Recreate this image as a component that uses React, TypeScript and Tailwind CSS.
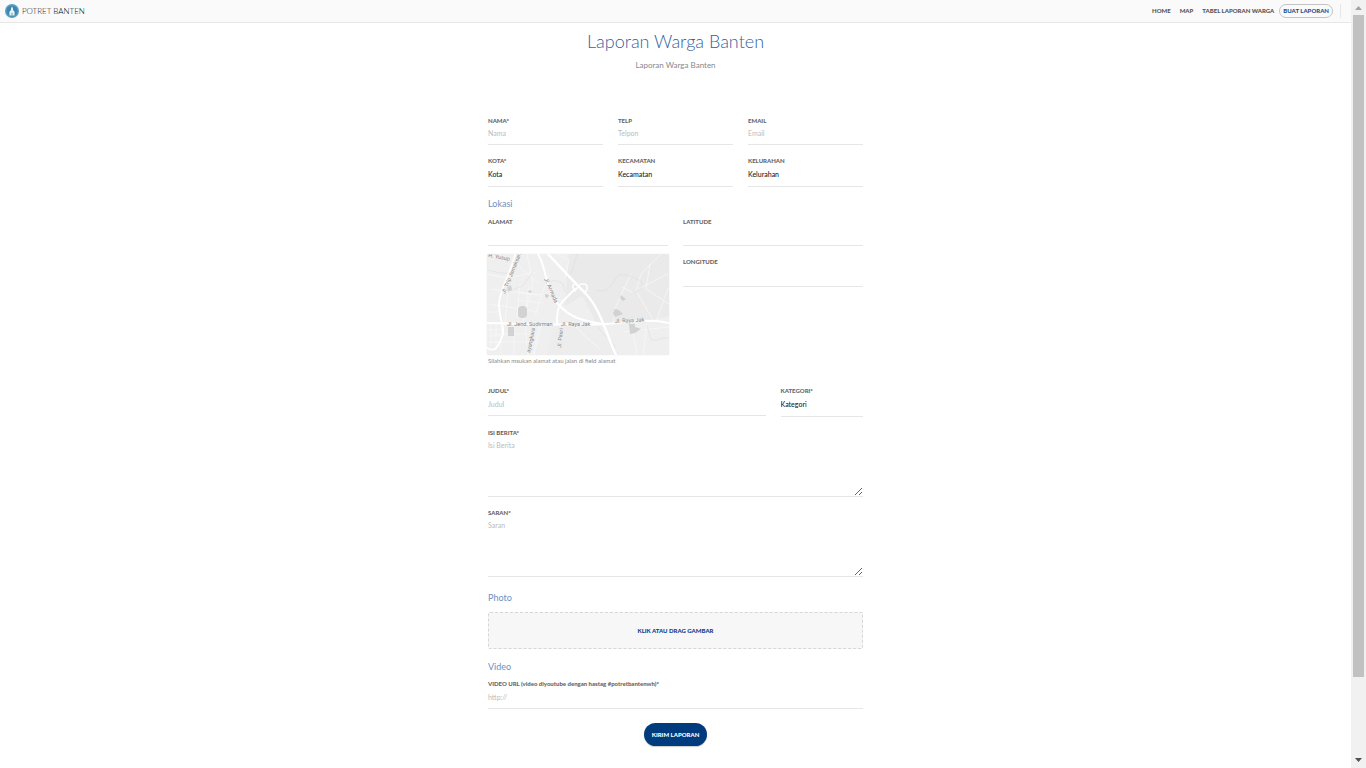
import type { ReactNode } from "react";

const labelClass = "block h-[10px] text-[6px] leading-[10px] font-black text-[#666] whitespace-nowrap";
const lineClass =
  "block w-full rounded-none border-0 border-b border-[#e6e6e6] bg-transparent p-0 text-[7px] leading-[15px] outline-none placeholder:text-[#bbb] placeholder:opacity-100";

function Field({
  id,
  label,
  className = "",
  children,
}: {
  id: string;
  label: string;
  className?: string;
  children: ReactNode;
}) {
  return (
    <div className={className}>
      <label htmlFor={id} className={labelClass}>
        {label}
      </label>
      {children}
    </div>
  );
}

function TextField({
  id,
  label,
  placeholder,
  tall = false,
  className,
}: {
  id: string;
  label: string;
  placeholder?: string;
  tall?: boolean;
  className?: string;
}) {
  return (
    <Field id={id} label={label} className={className}>
      <input
        id={id}
        type="text"
        placeholder={placeholder}
        className={`${lineClass} ${tall ? "h-5 pb-[3px]" : "h-[19px] pb-1"}`}
      />
    </Field>
  );
}

function SelectField({ id, label, option }: { id: string; label: string; option: string }) {
  return (
    <Field id={id} label={label}>
      <select id={id} className={`${lineClass} h-[21px] appearance-none pb-[3px] font-medium text-[#222]`}>
        <option>{option}</option>
      </select>
    </Field>
  );
}

function AreaField({ id, label, placeholder }: { id: string; label: string; placeholder: string }) {
  return (
    <Field id={id} label={label}>
      <textarea id={id} placeholder={placeholder} className={`${lineClass} h-[59px] resize-y`} />
    </Field>
  );
}

function SectionTitle({ children }: { children: ReactNode }) {
  return <h2 className="h-[14px] text-[9px] leading-[14px] font-normal text-[#6c8fc0]">{children}</h2>;
}

function Logo() {
  return (
    <svg viewBox="0 0 14 14" className="size-[14px]" aria-hidden="true">
      <circle cx="7" cy="7" r="7" fill="#5b9fc4" />
      <circle cx="7" cy="7" r="5.500" fill="#3c86af" />
      <path d="M7 2.300 8 4.500v1.500l1.600 1.800V11.500H4.400V7.800L6 6V4.500z" fill="#e9f2f7" />
      <path d="M6.500 8.800h1v2.700h-1z" fill="#5b9fc4" />
    </svg>
  );
}

function LocationMap() {
  return (
    <svg
      viewBox="0 0 182 101"
      preserveAspectRatio="xMidYMid slice"
      className="-mx-px block h-[101px] w-[calc(100%+2px)] rounded-[2px] bg-[#ececec] shadow-[0_0_1px_#ccc]"
      role="img"
      aria-label="Peta lokasi"
    >
      <rect width="182" height="101" fill="#efefef" />
      <path d="M82 0h100v62l-40 8-33-2-14-26-17 10z" fill="#eaeaea" />
      <path d="M82 70h30l20 31H60l5-30z" fill="#ededed" />
      <g fill="none" stroke="#f8f8f8" strokeWidth="0.8">
        <path d="M0 20l20 4 30-6M3 35l48 6M40 0l6 30-10 38M30 10l22 20M62 20l-14 42M2 50l50 8M14 70v31M27 72v29M5 80h45M3 88h48M38 70l3 31M52 72l-6 29M0 58h14M22 26l-4 45M57 42l20 5" />
        <path d="M0 76h16M0 82h16M0 88h14M4 70v22M9 70v26M30 38l24 3M30 46l24 3M33 30l-3 32M42 32l-5 34M54 72l-7 29M70 0l12 6-4 20M88 72l12 12 14 12" />
        <path d="M144 20l-15 32-3 18M135 33l10 5M163 10l-4 25 23 15M174 0l-20 20-5 18M181 20l-30 15M150 38l16 28M181 34l-12 34M160 70l-4 31M136 78l46-5M145 72l5 29" />
      </g>
      <g fill="none" stroke="#dedede" strokeWidth="0.6">
        <path d="M46 18c-4 6-6 8-9 12s-9 3-13 7M60 30c4-4 9-4 13-2s4 6 5 10M90 0l-5 18-7 8M109 36c10 4 15-4 20-12s17 0 23 2 3 10-5 13" />
        <path d="M182 84c-10-2-12 6-19 0l-3-13M111 72c5 12 13 10 17 22M0 16c15 3 20 6 27 0" />
      </g>
      <g fill="#d2d2d2">
        <rect x="31" y="52" width="9" height="12" rx="4" />
        <path d="M20 33l4-2 1 5-4 2zM42 36l3 1-1 2-3-1zM134 41l5 4-3 2-3-3zM128 55l4 1 4 4-8 3-2-4zM142 70h6v3l6 2-6 4-5 1zM58 40l4 1-1 3-3-1zM21 73h6v9h-6z" />
      </g>
      <g fill="none" stroke="#fff" strokeLinecap="round">
        <path d="M0 69c28 0 52 3 82 1 25 2 45-1 60-2 15-2 28-2 40 1" strokeWidth="2" />
        <path d="M28 0c-4 20-15 33-16 50 0 16 7 25 3 33-4 9-6 16-15 11" strokeWidth="1.800" />
        <path d="M51 0c9 14 7 37 20 50 11 13 24 17 45 20" strokeWidth="2" />
        <path d="M61 0c15 16 23 25 38 40 15 16 20 40 30 61" strokeWidth="2.400" />
        <path d="M70 70c0-12 1-18 6-23l12-12" strokeWidth="2" />
        <path d="M88 36c-4-3-2-8 2-5l8 7c3-1 3-8-1-8-5-1-6 3-9 7" strokeWidth="1.400" />
      </g>
      <g
        fill="#858585"
        stroke="#f4f4f4"
        strokeWidth="0.8"
        paintOrder="stroke"
        fontSize="5.500"
        fontFamily="Roboto, sans-serif"
      >
        <text x="20" y="72">Jl. Jend. Sudirman</text>
        <text x="74" y="72">Jl. Raya Jak</text>
        <text x="128" y="69" transform="rotate(-3 128 69)">Jl. Raya Jak</text>
        <text x="18" y="40" transform="rotate(-68 18 40)">Jl. Trip Jamaksari</text>
        <text x="57" y="25" transform="rotate(66 57 25)">Jl. Armada</text>
        <text x="43" y="99" transform="rotate(-78 43 99)">ayangkara</text>
        <text x="74" y="94" transform="rotate(-84 74 94)">Jl. Pasri</text>
        <text x="1" y="3" transform="rotate(10 1 3)">H. Yusup</text>
      </g>
    </svg>
  );
}

function ScrollRail() {
  return (
    <div className="sticky top-0 flex h-screen w-[15px] shrink-0 flex-col items-center bg-[#f1f1f1]" aria-hidden="true">
      <svg viewBox="0 0 15 15" className="h-[15px] w-[15px]">
        <path d="M4 10h7L7.500 6z" fill="#a3a3a3" />
      </svg>
      <div className="flex w-[11px] flex-1 flex-col">
        <div className="h-[89.700%] bg-[#c1c1c1]" />
      </div>
      <svg viewBox="0 0 15 15" className="h-[15px] w-[15px]">
        <path d="M4 5h7L7.500 9z" fill="#505050" />
      </svg>
    </div>
  );
}

export default function App() {
  return (
    <div className="flex min-h-screen items-start bg-white font-['Lato',sans-serif] text-[#555]">
      <div className="min-w-0 flex-1">
        <header className="flex h-[23px] items-center justify-between border-b border-[#e7e7e7] bg-[#fafafa] pr-[10px] pl-[5px]">
          <a href="#" className="flex items-center gap-[3px] text-[8px] leading-[12px] font-light text-[#222]">
            <Logo />
            <span>
              POTRET <span className="text-black">BANTEN</span>
            </span>
          </a>
          <nav className="flex items-center text-[6px] leading-[12px] font-black text-[#555]">
            <a href="#" className="mr-[9px]">HOME</a>
            <a href="#map" className="mr-[9px]">MAP</a>
            <a href="#tabel" className="mr-[5px]">TABEL LAPORAN WARGA</a>
            <a href="#buat" className="rounded-full border border-[#c4c4c4] px-[3px] text-[#1d4f91]">BUAT LAPORAN</a>
            <span className="ml-[7px] h-[14px] border-l border-[#e7e7e7]" />
          </nav>
        </header>

        <main className="mx-auto w-full max-w-[375px] pb-[22px]">
          <div className="pt-[6px] text-center">
            <h1 className="text-[18px] leading-[24px] font-light text-[#33619f]">Laporan Warga Banten</h1>
            <p className="mt-[7px] text-[8px] leading-[10px] text-[#888]">Laporan Warga Banten</p>
          </div>

          <form className="mt-[46px]" onSubmit={(e) => e.preventDefault()}>
            <div className="grid grid-cols-3 gap-x-[15px] gap-y-[11px]">
              <TextField id="nama" label="NAMA*" placeholder="Nama" />
              <TextField id="telp" label="TELP" placeholder="Telpon" />
              <TextField id="email" label="EMAIL" placeholder="Email" />
              <SelectField id="kota" label="KOTA*" option="Kota" />
              <SelectField id="kecamatan" label="KECAMATAN" option="Kecamatan" />
              <SelectField id="kelurahan" label="KELURAHAN" option="Kelurahan" />
            </div>

            <div className="mt-[10px]">
              <SectionTitle>Lokasi</SectionTitle>
            </div>
            <div className="mt-[6px] grid grid-cols-2 gap-x-[15px]">
              <div>
                <TextField id="alamat" label="ALAMAT" />
                <div className="mt-2">
                  <LocationMap />
                </div>
                <p className="mt-px text-[6px] leading-[10px] text-[#888]">
                  Silahkan msukan alamat atau jalan di field alamat
                </p>
              </div>
              <div className="flex flex-col gap-[11px]">
                <TextField id="latitude" label="LATITUDE" />
                <TextField id="longitude" label="LONGITUDE" tall />
              </div>
            </div>

            <div className="mt-5 grid grid-cols-4 gap-x-[15px]">
              <TextField id="judul" label="JUDUL*" placeholder="Judul" tall className="col-span-3" />
              <SelectField id="kategori" label="KATEGORI*" option="Kategori" />
            </div>
            <div className="mt-[11px] flex flex-col gap-[11px]">
              <AreaField id="isi" label="ISI BERITA*" placeholder="Isi Berita" />
              <AreaField id="saran" label="SARAN*" placeholder="Saran" />
            </div>

            <div className="mt-[14px]">
              <SectionTitle>Photo</SectionTitle>
            </div>
            <button
              type="button"
              className="mt-[7px] block h-[37px] w-full rounded-[2px] border border-dashed border-[#d6d6d6] bg-[#f7f7f7] text-[6px] font-black text-[#0b4192]"
            >
              KLIK ATAU DRAG GAMBAR
            </button>

            <div className="mt-[11px]">
              <SectionTitle>Video</SectionTitle>
            </div>
            <div className="mt-[5px]">
              <TextField
                id="video"
                label="VIDEO URL (video diyoutube dengan hastag #potretbantenwh)*"
                placeholder="http://"
                tall
              />
            </div>
            <button
              type="submit"
              className="mx-auto mt-[14px] block h-[23px] rounded-full bg-[#003c7d] px-2 pb-px text-[6px] font-black text-white shadow-[0_1px_1px_#ccc]"
            >
              KIRIM LAPORAN
            </button>
          </form>
        </main>
      </div>
      <ScrollRail />
    </div>
  );
}
